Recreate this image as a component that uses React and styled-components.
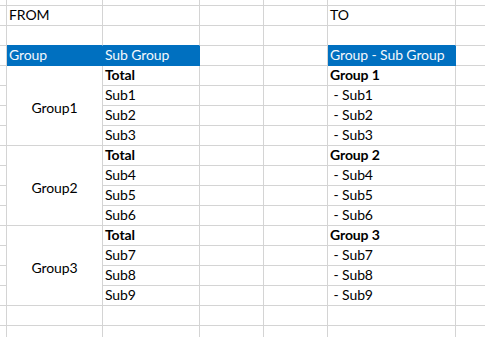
import React from "react";
import styled, { createGlobalStyle } from "styled-components";

const Global = createGlobalStyle`
  html, body { margin: 0; padding: 0; background: #fff; }
  body { width: 485px; height: 337px; overflow: hidden; }
`;

const LINE = "#d4d4d4";
const BLUE = "#0070c0";

const Sheet = styled.div`
  display: grid;
  grid-template-columns: 7px 96px 97px 64px 64px 128px 40px;
  grid-template-rows: 6px repeat(16, 20px) 20px;
  font-family: Lato, "Noto Sans", sans-serif;
  font-size: 14px;
  color: #000;
  width: 485px;
  height: 337px;
  overflow: hidden;
`;

const Cell = styled.div`
  box-sizing: border-box;
  border-right: 1px solid ${(p) => (p.$fill ? BLUE : LINE)};
  border-bottom: 1px solid ${(p) => (p.$fill || p.$blueBelow ? BLUE : LINE)};
  background: ${(p) => (p.$fill ? BLUE : "transparent")};
  color: ${(p) => (p.$fill ? "#f4f8fc" : "#000")};
  font-weight: ${(p) => (p.$bold ? 700 : 400)};
  white-space: pre;
  overflow: hidden;
  display: flex;
  align-items: flex-end;
  justify-content: flex-start;
  padding: 0 0 3px 2px;
  line-height: 15px;
  letter-spacing: -0.1px;
`;

const Merged = styled(Cell)`
  grid-row: span 4;
  justify-content: center;
  align-items: center;
  padding: 4px 0 0 0;
`;

const NCOLS = 7;

function Row({ cells = [], blueBelow = [] }) {
  const out = [];
  for (let i = 0; i < NCOLS; i++) {
    const def = cells[i] || {};
    out.push(
      <Cell key={i} $fill={def.fill} $bold={def.bold} $blueBelow={blueBelow.includes(i)}>
        {def.t || ""}
      </Cell>
    );
  }
  return out;
}

const groups = [
  { name: "Group1", title: "Group 1", subs: ["Sub1", "Sub2", "Sub3"] },
  { name: "Group2", title: "Group 2", subs: ["Sub4", "Sub5", "Sub6"] },
  { name: "Group3", title: "Group 3", subs: ["Sub7", "Sub8", "Sub9"] },
];

export default function App() {
  const rows = [];
  rows.push(<Row key="top" />);
  rows.push(<Row key="r1" cells={[{}, { t: "FROM" }, {}, {}, {}, { t: "TO" }, {}]} />);
  rows.push(<Row key="r2" blueBelow={[1, 2, 5]} />);
  rows.push(
    <Row
      key="r3"
      cells={[{}, { t: "Group", fill: true }, { t: "Sub Group", fill: true }, {}, {}, { t: "Group - Sub Group", fill: true }, {}]}
    />
  );
  groups.forEach((g) => {
    rows.push(<Cell key={g.name + "-a"} />);
    rows.push(<Merged key={g.name + "-m"}>{g.name}</Merged>);
    rows.push(<Cell key={g.name + "-t"} $bold>Total</Cell>);
    rows.push(<Cell key={g.name + "-c3"} />);
    rows.push(<Cell key={g.name + "-c4"} />);
    rows.push(<Cell key={g.name + "-h"} $bold>{g.title}</Cell>);
    rows.push(<Cell key={g.name + "-c6"} />);
    g.subs.forEach((s) => {
      rows.push(<Cell key={s + "-a"} />);
      rows.push(<Cell key={s + "-s"}>{s}</Cell>);
      rows.push(<Cell key={s + "-c3"} />);
      rows.push(<Cell key={s + "-c4"} />);
      rows.push(<Cell key={s + "-d"}>{" - " + s}</Cell>);
      rows.push(<Cell key={s + "-c6"} />);
    });
  });
  rows.push(<Row key="e1" />);
  rows.push(<Row key="e2" />);
  return (
    <>
      <Global />
      <Sheet>{rows}</Sheet>
    </>
  );
}
